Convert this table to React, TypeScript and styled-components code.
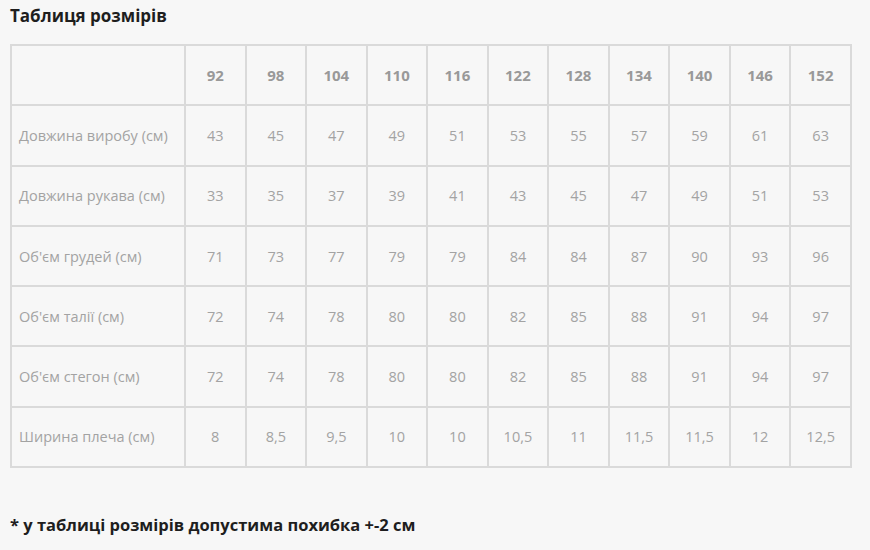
import React from "react";
import styled, { createGlobalStyle } from "styled-components";

const GlobalStyle = createGlobalStyle`
  html, body {
    margin: 0;
    padding: 0;
    background: #f7f7f7;
  }
  body {
    font-family: "Open Sans", "Noto Sans", sans-serif;
  }
`;

const Page = styled.div`
  width: 870px;
  height: 550px;
  padding: 4px 10px 0 10px;
  box-sizing: border-box;
  background: #f7f7f7;
`;

const Title = styled.h2`
  font-size: 17px;
  font-weight: 700;
  color: #1e1e1e;
  margin: 0 0 16px 0;
  line-height: 24px;
`;

const Table = styled.table`
  width: 842px;
  border-collapse: collapse;
  table-layout: fixed;
  border: 2px solid #dadada;
`;

const Cell = styled.td<{ $head?: boolean }>`
  border: 2px solid #dadada;
  height: 58.3px;
  padding: 0;
  text-align: center;
  font-size: 14.5px;
  color: #a3a3a3;
  font-weight: ${(p) => (p.$head ? 700 : 400)};
  ${(p) => p.$head && "color: #999999; font-size: 15px;"}
`;

const LabelCell = styled(Cell)`
  width: 165px;
  text-align: left;
  padding-left: 7px;
`;

const Note = styled.p`
  margin: 45px 0 0 0;
  font-size: 16.5px;
  font-weight: 700;
  color: #1e1e1e;
`;

const sizes = ["92", "98", "104", "110", "116", "122", "128", "134", "140", "146", "152"];

const rows: { label: string; values: string[] }[] = [
  { label: "Довжина виробу (см)", values: ["43", "45", "47", "49", "51", "53", "55", "57", "59", "61", "63"] },
  { label: "Довжина рукава (см)", values: ["33", "35", "37", "39", "41", "43", "45", "47", "49", "51", "53"] },
  { label: "Об'єм грудей (см)", values: ["71", "73", "77", "79", "79", "84", "84", "87", "90", "93", "96"] },
  { label: "Об'єм талії (см)", values: ["72", "74", "78", "80", "80", "82", "85", "88", "91", "94", "97"] },
  { label: "Об'єм стегон (см)", values: ["72", "74", "78", "80", "80", "82", "85", "88", "91", "94", "97"] },
  { label: "Ширина плеча (см)", values: ["8", "8,5", "9,5", "10", "10", "10,5", "11", "11,5", "11,5", "12", "12,5"] },
];

export default function App() {
  return (
    <Page>
      <GlobalStyle />
      <Title>Таблиця розмірів</Title>
      <Table>
        <thead>
          <tr>
            <LabelCell as="th" $head />
            {sizes.map((s) => (
              <Cell as="th" $head key={s}>
                {s}
              </Cell>
            ))}
          </tr>
        </thead>
        <tbody>
          {rows.map((r) => (
            <tr key={r.label}>
              <LabelCell>{r.label}</LabelCell>
              {r.values.map((v, i) => (
                <Cell key={i}>{v}</Cell>
              ))}
            </tr>
          ))}
        </tbody>
      </Table>
      <Note>* у таблиці розмірів допустима похибка +-2 см</Note>
    </Page>
  );
}
